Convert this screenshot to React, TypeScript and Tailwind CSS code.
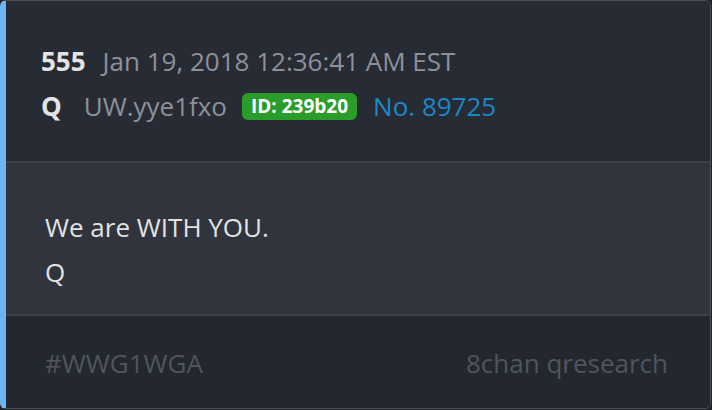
export default function App() {
  return (
    <div className="w-[712px] h-[410px] bg-[#1f2329]" style={{ fontFamily: '"Open Sans", sans-serif' }}>
      <div className="w-[711px] h-[409px] flex flex-col rounded-[6px] border border-[#4a4f58] border-l-[6px] border-l-[#6fb3f5] overflow-hidden">
        <div className="h-[162px] shrink-0 bg-[#272b33] flex flex-col pt-[38px] pl-[35px] border-b-2 border-[#3c414a] text-[26px] leading-[45px]">
          <div className="flex items-baseline">
            <span className="font-bold text-[#e4e4e4] mr-[17px]">555</span>
            <span className="text-[#8d919a]">Jan 19, 2018 12:36:41 AM EST</span>
          </div>
          <div className="flex items-center">
            <span className="font-bold text-[#e4e4e4] mr-[22px]">Q</span>
            <span className="text-[#8d919a] mr-[15px]">UW.yye1fxo</span>
            <span className="bg-[#2a9c2a] text-white font-bold text-[19px] leading-[27px] px-[9px] rounded-[6px] mr-[16px]">ID: 239b20</span>
            <span className="text-[#1b88c9]">No. 89725</span>
          </div>
        </div>
        <div className="h-[153px] shrink-0 bg-[#2f343d] flex flex-col pt-[42px] pl-[39px] text-[26px] leading-[45px] text-[#e2e2e2] border-b-2 border-[#3c414a]">
          <div>We are WITH YOU.</div>
          <div>Q</div>
        </div>
        <div className="flex-1 bg-[#23272e] flex justify-between pt-[25px] pl-[39px] pr-[42px] text-[26px] leading-[45px] text-[#50555e]">
          <span>#WWG1WGA</span>
          <span>8chan qresearch</span>
        </div>
      </div>
    </div>
  );
}
